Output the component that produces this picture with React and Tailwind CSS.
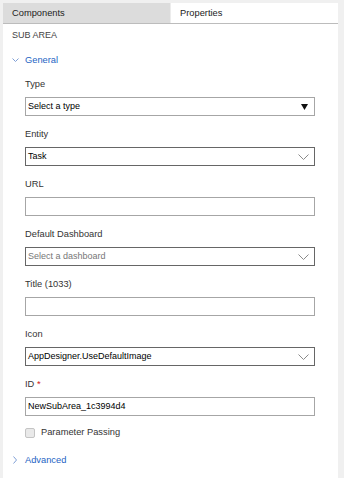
import React from 'react';

const Chevron = ({ className = '' }) => (
  <svg width="11" height="6" viewBox="0 0 11 6" className={className}>
    <polyline points="0.5,0.5 5.5,5.5 10.5,0.5" fill="none" stroke="#8a8a8a" strokeWidth="1" />
  </svg>
);

function Field({ label, required, children, first }) {
  return (
    <div className={first ? 'mt-[10px]' : 'mt-[11px]'}>
      <div className="h-[14px] leading-[14px] text-[9.3px] text-[#333]">
        {label}
        {required && <span className="text-[#d02020]"> *</span>}
      </div>
      <div className="mt-[6px]">{children}</div>
    </div>
  );
}

function TextBox({ value = '' }) {
  return (
    <div className="h-[19px] w-[290px] border border-[#a6a6a6] bg-white px-[2px] text-[9px] leading-[17px] text-black">
      {value}
    </div>
  );
}

function DropDown({ value, placeholder }) {
  return (
    <div className="flex h-[19px] w-[290px] items-center justify-between border border-[#666] bg-white pl-[2px] pr-[5px] text-[9px]">
      <span className={placeholder ? 'text-[#777]' : 'text-black'}>{value || placeholder}</span>
      <Chevron />
    </div>
  );
}

export default function App() {
  return (
    <div className="h-[478px] w-[344px] bg-[#f0f0f0] pl-[3px] pr-[6px] pt-[3px] font-['Liberation_Sans',Arial,sans-serif]">
      <div className="h-full bg-white">
        {/* tabs */}
        <div className="flex h-[21px] border-b border-[#bcbcbc] text-[9.3px] leading-[20px]">
          <div className="w-[168px] border-r border-[#ececec] bg-[#dcdcdc] pl-[9px] text-[#222]">Components</div>
          <div className="flex-1 bg-white pl-[9px] text-[#222]">Properties</div>
        </div>

        <div className="mt-[4px] h-[14px] pl-[9px] text-[9px] leading-[14px] text-[#444]">SUB AREA</div>

        <div className="mt-[11px] flex h-[14px] items-center pl-[9px] text-[9.3px] leading-[14px] text-[#2463c4]">
          <svg width="7" height="4" viewBox="0 0 7 4" className="mr-[6px]">
            <polyline points="0.5,0.5 3.5,3.5 6.5,0.5" fill="none" stroke="#7f9fd6" strokeWidth="1" />
          </svg>
          General
        </div>

        <div className="pl-[22px]">
          <Field label="Type" first>
            <div className="flex h-[19px] w-[290px] items-center justify-between border border-[#a6a6a6] bg-white pl-[2px] pr-[6px] text-[9px] text-black">
              <span>Select a type</span>
              <svg width="7" height="6" viewBox="0 0 7 6">
                <polygon points="0,0 7,0 3.5,6" fill="#111" />
              </svg>
            </div>
          </Field>
          <Field label="Entity">
            <DropDown value="Task" />
          </Field>
          <Field label="URL">
            <TextBox />
          </Field>
          <Field label="Default Dashboard">
            <DropDown placeholder="Select a dashboard" />
          </Field>
          <Field label="Title (1033)">
            <TextBox />
          </Field>
          <Field label="Icon">
            <DropDown value="AppDesigner.UseDefaultImage" />
          </Field>
          <Field label="ID" required>
            <TextBox value="NewSubArea_1c3994d4" />
          </Field>

          <label className="mt-[10px] flex h-[14px] items-center text-[9.3px] text-[#333]">
            <span className="mr-[6px] inline-block h-[10px] w-[10px] rounded-[2px] border border-[#c4c4c4] bg-[#e9e9e9]" />
            Parameter Passing
          </label>
        </div>

        <div className="mt-[13px] flex h-[14px] items-center pl-[10px] text-[9.3px] leading-[14px] text-[#2463c4]">
          <svg width="4" height="8" viewBox="0 0 4 8" className="mr-[8px]">
            <polyline points="0.5,0.5 3.5,4 0.5,7.5" fill="none" stroke="#7f9fd6" strokeWidth="1" />
          </svg>
          Advanced
        </div>
      </div>
    </div>
  );
}
